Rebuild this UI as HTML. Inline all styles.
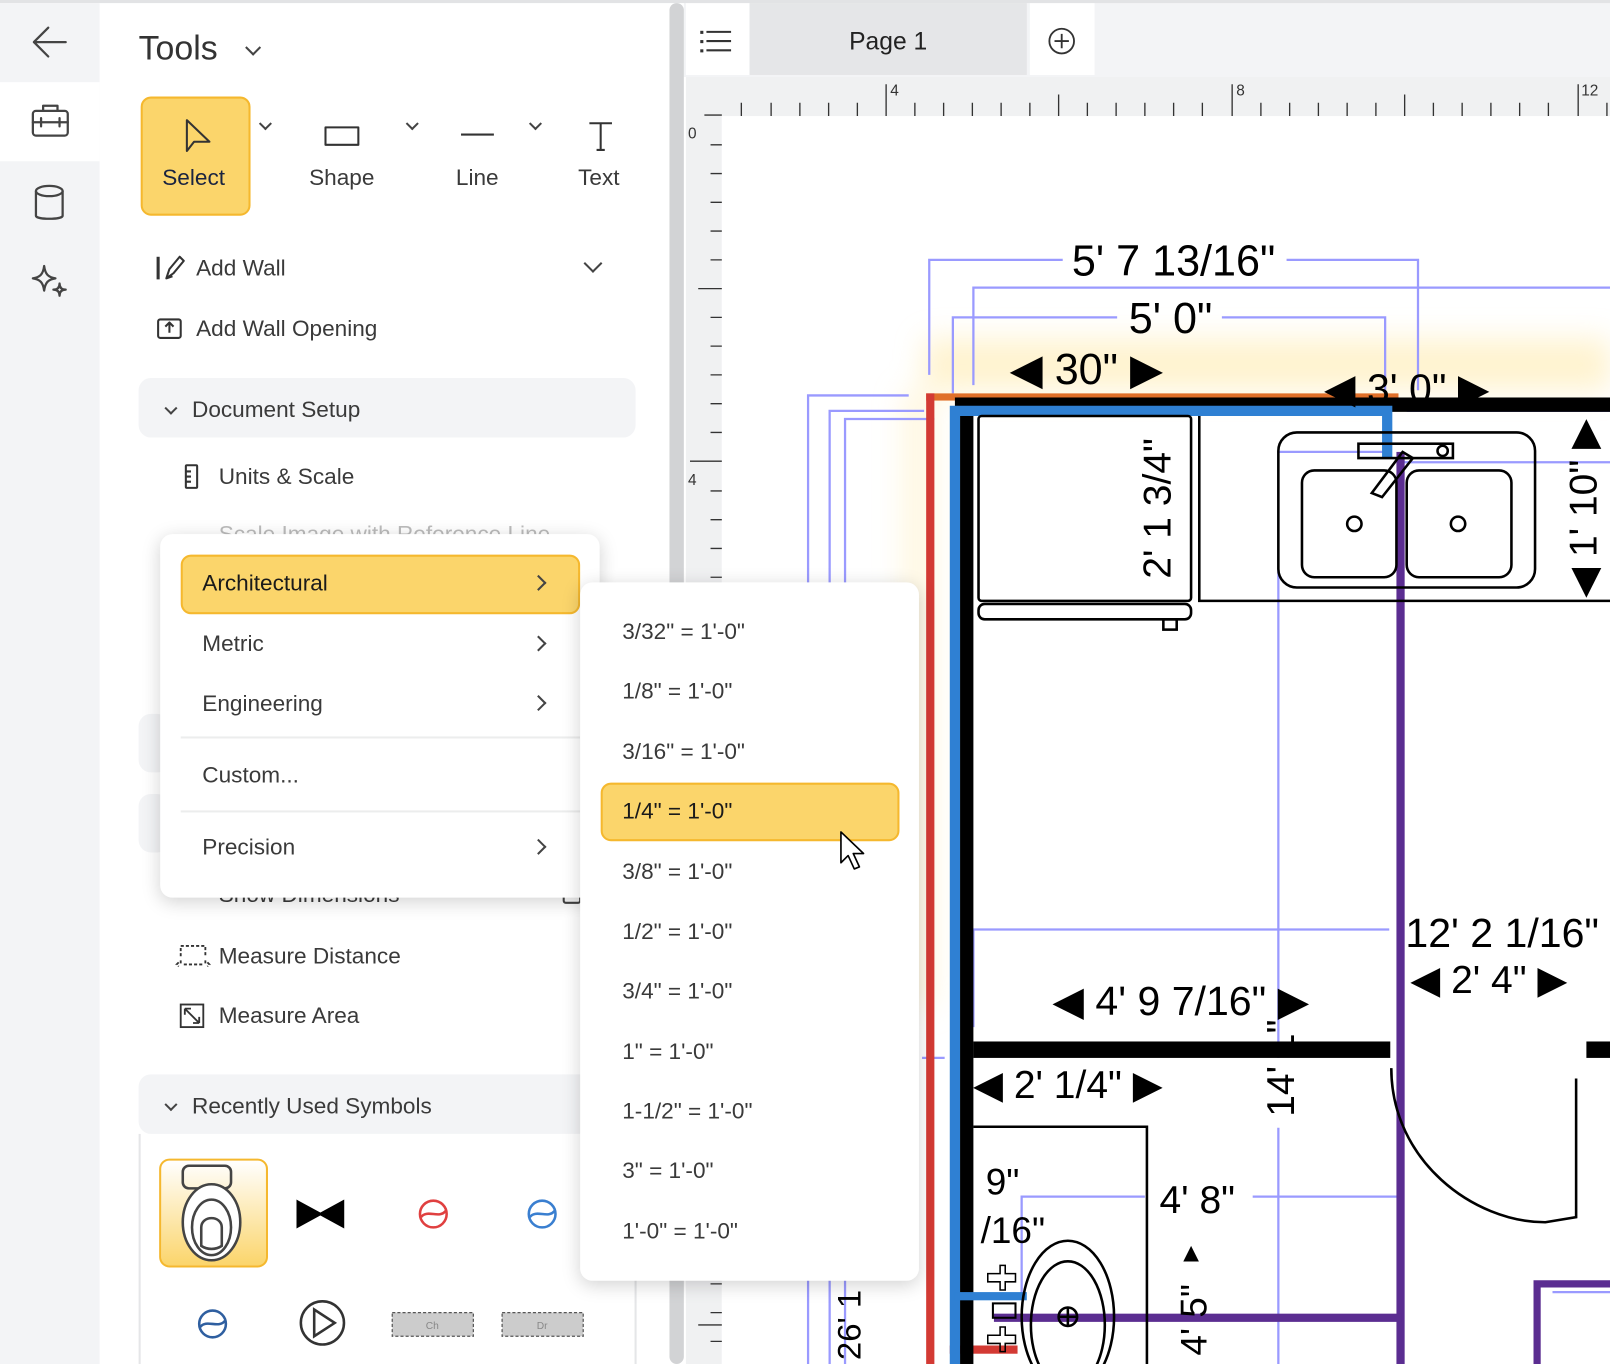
<!DOCTYPE html>
<html><head><meta charset="utf-8"><style>
*{margin:0;padding:0;box-sizing:border-box}
html,body{width:1610px;height:1364px;overflow:hidden;background:#fff;font-family:"Liberation Sans",sans-serif}
#w{position:absolute;left:0;top:0;width:1568px;height:1328px;transform:scale(1.02679,1.0271);transform-origin:0 0;overflow:hidden}
.a{position:absolute}
.t{position:absolute;white-space:nowrap;color:#3a3a3a;font-size:22px}
.ch{position:absolute;width:11px;height:11px;border-right:2px solid #444;border-bottom:2px solid #444;transform:rotate(45deg)}
.cr{position:absolute;width:11px;height:11px;border-right:2px solid #444;border-bottom:2px solid #444;transform:rotate(-45deg)}
.menu{position:absolute;background:#fff;border-radius:12px;box-shadow:0 4px 18px rgba(0,0,0,.18)}
.hl{position:absolute;background:#fbd56b;border:2px solid #f5b82e;border-radius:10px}
</style></head><body><div id="w">
<svg class="a" style="left:0;top:0" width="1568" height="1328" viewBox="0 0 1568 1328">
<defs><filter id="bl"><feGaussianBlur stdDeviation="14"/></filter></defs>
<rect x="666" y="0" width="902" height="75" fill="#f3f4f6"/>
<rect x="668" y="3" width="62" height="70" fill="#fff"/>
<rect x="730" y="3" width="270" height="70" fill="#e5e6e8"/>
<rect x="1003" y="3" width="63" height="70" fill="#fff"/>
<g stroke="#333" stroke-width="2"><line x1="688" y1="31" x2="712" y2="31"/><line x1="688" y1="40" x2="712" y2="40"/><line x1="688" y1="49" x2="712" y2="49"/></g>
<g fill="#333"><rect x="682" y="30" width="3" height="3"/><rect x="682" y="39" width="3" height="3"/><rect x="682" y="48" width="3" height="3"/></g>
<circle cx="1034" cy="40" r="12" fill="none" stroke="#333" stroke-width="1.8"/><path d="M1034 33v14M1027 40h14" stroke="#333" stroke-width="1.8"/>
<text x="865" y="48" font-size="24" text-anchor="middle" fill="#222" font-family="Liberation Sans">Page 1</text>
<rect x="668" y="75" width="900" height="38" fill="#f0f1f2"/>
<rect x="668" y="113" width="35" height="1215" fill="#f0f1f2"/>
<rect x="703" y="113" width="865" height="1215" fill="#fff"/>
<g stroke="#333" stroke-width="1.3">
<line x1="686" y1="112" x2="703" y2="112"/>
<path d="M722 100v13M751 100v13M779 100v13M807 100v13M835 100v13M891 100v13M919 100v13M947 100v13M975 100v13M1003 100v13M1059 100v13M1087 100v13M1115 100v13M1143 100v13M1171 100v13M1228 100v13M1256 100v13M1284 100v13M1312 100v13M1340 100v13M1396 100v13M1424 100v13M1452 100v13M1480 100v13M1508 100v13M1565 100v13"/>
<path d="M863 82v31M1200 82v31M1537 82v31M1031 92v21M1368 92v21"/>
<path d="M692 141h11M692 169h11M692 197h11M692 225h11M692 253h11M692 309h11M692 337h11M692 365h11M692 393h11M692 421h11M692 478h11M692 506h11M692 534h11M692 562h11M692 590h11M692 1250h11M692 1278h11M692 1306h11"/>
<path d="M680 281h23M672 449h31M680 1290h23"/>
</g>
<g font-size="15" fill="#333"><text x="867" y="93">4</text><text x="1204" y="93">8</text><text x="1540" y="93">12</text><text x="670" y="135">0</text><text x="670" y="472">4</text></g>
<g filter="url(#bl)" opacity=".55"><rect x="900" y="330" width="668" height="50" fill="#ffe9a8"/><rect x="880" y="380" width="30" height="600" fill="#fff0c4"/></g>
<g stroke="#9a9aff" stroke-width="2.2" fill="none">
<path d="M905 365V253h130M1253 253h128v127"/>
<path d="M948 375V280h620"/>
<path d="M928 383V309h160M1190 309h159v110"/>
<path d="M787 1328V385h98M808 1328V400h92M823 1328V408h87"/>
<path d="M1245 1030V440h110M1245 1098v230"/>
<path d="M1370 400h198M1365 450h203"/>
<path d="M948 1000V905h405"/>
<path d="M898 1030h22M905 1198v100"/>
<path d="M995 1265V1165h120M1220 1165h142v105"/>
<path d="M1497 1255v73M1512 1258h56"/>
</g>
<rect x="902" y="383" width="460" height="7" fill="#e0702a"/>
<rect x="902" y="383" width="8" height="945" fill="#d33a34"/>
<rect x="925" y="1310" width="66" height="8" fill="#d33a34"/>
<rect x="930" y="387" width="638" height="14" fill="#000"/>
<rect x="935" y="400" width="13" height="928" fill="#000"/>
<path d="M930 1328V400h421v45" stroke="#2f80d3" stroke-width="10" fill="none"/>
<rect x="930" y="1258" width="70" height="8" fill="#2f80d3"/>
<rect x="1360" y="440" width="8" height="888" fill="#5b2d91"/>
<rect x="968" y="1279" width="397" height="8" fill="#5b2d91"/>
<path d="M1497 1328V1250h71" stroke="#5b2d91" stroke-width="7" fill="none"/>
<rect x="948" y="1014" width="406" height="16" fill="#000"/>
<rect x="1545" y="1014" width="23" height="16" fill="#000"/>
<g stroke="#000" stroke-width="2.5" fill="none">
<rect x="953" y="405" width="207" height="180" rx="3"/>
<rect x="953" y="588" width="207" height="15" rx="6"/>
<rect x="1133" y="603" width="13" height="10"/>
<path d="M1168 405v180h400"/>
<rect x="1245" y="421" width="250" height="151" rx="18"/>
<rect x="1268" y="458" width="92" height="104" rx="12"/>
<rect x="1370" y="458" width="102" height="104" rx="12"/>
<circle cx="1319" cy="510" r="7"/><circle cx="1420" cy="510" r="7"/>
<rect x="1323" y="432" width="92" height="14"/><circle cx="1405" cy="439" r="5"/>
<path d="M1336 480l30-40 10 6-30 38z"/>
<path d="M1355 1040c0 90 80 150 150 150l30-5V1050"/>
<path d="M948 1097h169v231"/>
<ellipse cx="1040" cy="1282" rx="45" ry="74"/><ellipse cx="1040" cy="1290" rx="36" ry="62"/>
<circle cx="1040" cy="1282" r="9"/><path d="M1031 1282h18M1040 1273v18"/>
<path d="M962 1240h12v-8h5v8h10v8h-10v8h-5v-8h-12zM962 1300h12v-8h5v8h10v8h-10v8h-5v-8h-12z" stroke-width="1.5"/>
<rect x="967" y="1269" width="22" height="14" stroke-width="2"/>
</g>
<g font-family="'Liberation Sans Narrow','Liberation Sans',sans-serif" fill="#000">
<text x="1143" y="268" font-size="42" text-anchor="middle">5' 7 13/16"</text>
<text x="1140" y="324" font-size="42" text-anchor="middle">5' 0"</text>
<text x="1058" y="374" font-size="42" text-anchor="middle">◀ 30" ▶</text>
<text x="1370" y="392" font-size="40" text-anchor="middle">◀ 3' 0" ▶</text>
</g>
<g font-family="'Liberation Sans',sans-serif" fill="#000">
<text transform="translate(1140 495) rotate(-90)" font-size="38" text-anchor="middle">2' 1 3/4"</text>
<text transform="translate(1555 495) rotate(-90)" font-size="38" text-anchor="middle">◀ 1' 10" ▶</text>
<text x="1463" y="922" font-size="40" text-anchor="middle">12' 2 1/16"</text>
<text x="1450" y="967" font-size="38" text-anchor="middle">◀ 2' 4" ▶</text>
<text x="1150" y="988" font-size="40" text-anchor="middle">◀ 4' 9 7/16" ▶</text>
<text x="1040" y="1069" font-size="38" text-anchor="middle">◀ 2' 1/4" ▶</text>
<text transform="translate(1260 1040) rotate(-90)" font-size="38" text-anchor="middle">14' 1"</text>
<text x="1166" y="1181" font-size="38" text-anchor="middle">4' 8"</text>
<text x="960" y="1163" font-size="36">9"</text>
<text x="955" y="1210" font-size="36">/16"</text>
<text transform="translate(1175 1285) rotate(-90)" font-size="36" text-anchor="middle">4' 5"</text>
<text x="1160" y="1228" font-size="26" text-anchor="middle">▲</text>
<text transform="translate(838 1290) rotate(-90)" font-size="32" text-anchor="middle">26' 1</text>
</g>
</svg>
<div class="a" style="left:0;top:0;width:1568px;height:3px;background:#e2e3e5"></div>
<div class="a" style="left:0;top:3px;width:97px;height:1325px;background:#f3f4f6"></div>
<div class="a" style="left:0;top:80px;width:97px;height:77px;background:#fff"></div>
<svg class="a" style="left:0;top:0" width="97" height="300" fill="none" stroke="#444" stroke-width="2.2" stroke-linecap="round" stroke-linejoin="round">
<path d="M64 41H33M47 27L33 41l14 14"/>
<rect x="32" y="108" width="34" height="24" rx="3"/><path d="M42 108v-5h14v5M32 119h34M40 115v8M58 115v8"/>
<ellipse cx="48" cy="186" rx="13" ry="5"/><path d="M35 186v24c0 4 26 4 26 0v-24"/>
<path d="M43 259c1 8 4 11 11 12-7 1-10 4-11 12-1-8-4-11-11-12 7-1 10-4 11-12zM58 276c0 4 2 6 6 6-4 0-6 2-6 6 0-4-2-6-6-6 4 0 6-2 6-6z"/>
</svg>
<div class="a" style="left:652px;top:3px;width:14px;height:1325px;background:#d2d3d5;border-radius:7px"></div>
<div class="t" style="left:135px;top:28px;font-size:33px;color:#333">Tools</div>
<div class="ch" style="left:241px;top:41px"></div>
<div class="hl" style="left:137px;top:94px;width:107px;height:116px"></div>
<svg class="a" style="left:0;top:0" width="640" height="500" fill="none" stroke="#333" stroke-width="2" stroke-linejoin="round">
<path d="M182 117v30l7-9h15z"/>
<rect x="317" y="124" width="32" height="17"/>
<path d="M449 131h32"/>
<path d="M574 120h22M585 120v26M581 146h8"/>
<path d="M154 250v22" stroke-width="3"/><path d="M162 271l3-9 10-12 4 4-10 12zM162 271l6-2"/>
<rect x="154" y="311" width="22" height="18" rx="2"/><path d="M165 324v-9M161 318l4-4 4 4"/>
<rect x="181" y="453" width="11" height="22" rx="1"/><path d="M181 459h5M181 464h5M181 469h5"/>
</svg>
<div class="ch" style="left:254px;top:116px;width:9px;height:9px"></div>
<div class="ch" style="left:397px;top:116px;width:9px;height:9px"></div>
<div class="ch" style="left:517px;top:116px;width:9px;height:9px"></div>
<div class="t" style="left:158px;top:160px;color:#1a2440">Select</div>
<div class="t" style="left:301px;top:160px">Shape</div>
<div class="t" style="left:444px;top:160px">Line</div>
<div class="t" style="left:563px;top:160px">Text</div>
<div class="t" style="left:191px;top:248px">Add Wall</div>
<div class="ch" style="left:571px;top:250px;width:13px;height:13px"></div>
<div class="t" style="left:191px;top:307px">Add Wall Opening</div>
<div class="a" style="left:135px;top:368px;width:484px;height:58px;background:#f3f4f6;border-radius:12px"></div>
<div class="ch" style="left:162px;top:393px;width:9px;height:9px"></div>
<div class="t" style="left:187px;top:386px">Document Setup</div>
<div class="t" style="left:213px;top:451px">Units &amp; Scale</div>
<div class="t" style="left:213px;top:507px;color:#bbb">Scale Image with Reference Line</div>
<div class="a" style="left:135px;top:695px;width:30px;height:57px;background:#f3f4f6;border-radius:12px"></div>
<div class="a" style="left:135px;top:773px;width:30px;height:57px;background:#f3f4f6;border-radius:12px"></div>
<div class="t" style="left:213px;top:858px">Show Dimensions</div>
<div class="a" style="left:548px;top:862px;width:18px;height:18px;border:2px solid #444;border-radius:3px"></div>
<svg class="a" style="left:170px;top:915px" width="40" height="90" fill="none" stroke="#333" stroke-width="1.8"><path d="M6 16V6h24v10M6 20v4M30 20v4M4 22l-2 2 2 2M32 22l2 2-2 2M9 24h18" stroke-dasharray="3 2"/><rect x="6" y="63" width="22" height="22"/><path d="M10 67l14 14M10 67h6M10 67v6M24 81h-6M24 81v-6"/></svg>
<div class="t" style="left:213px;top:918px">Measure Distance</div>
<div class="t" style="left:213px;top:976px">Measure Area</div>
<div class="a" style="left:135px;top:1046px;width:484px;height:58px;background:#f3f4f6;border-radius:12px"></div>
<div class="ch" style="left:162px;top:1071px;width:9px;height:9px"></div>
<div class="t" style="left:187px;top:1064px">Recently Used Symbols</div>
<div class="a" style="left:135px;top:1104px;width:2px;height:224px;background:#e5e6e8"></div>
<div class="a" style="left:618px;top:1104px;width:2px;height:224px;background:#e5e6e8"></div>
<div class="hl" style="left:155px;top:1128px;width:106px;height:106px;background:linear-gradient(#fff 0%,#fbd56b 100%)"></div>
<svg class="a" style="left:150px;top:1125px" width="450" height="203" fill="none" stroke-width="2.5">
<rect x="28" y="10" width="47" height="22" rx="6" stroke="#444"/>
<ellipse cx="56" cy="65" rx="28" ry="37" stroke="#444" fill="#fff"/><ellipse cx="56" cy="70" rx="19" ry="27" stroke="#444"/><path d="M46 70c0-12 20-12 20 0v18c-6 4-14 4-20 0z" stroke="#444"/>
<path d="M140 45l22 12 22-12v24l-22-12-22 12z" fill="#000" stroke="#000"/>
<circle cx="272" cy="57" r="13" stroke="#e04040"/><path d="M260 60c6-8 18 2 24-6" stroke="#e04040"/>
<circle cx="378" cy="57" r="13" stroke="#3a7fd0"/><path d="M366 60c6-8 18 2 24-6" stroke="#3a7fd0"/>
<circle cx="57" cy="164" r="13" stroke="#2f5fa0"/><path d="M45 167c6-8 18 2 24-6" stroke="#2f5fa0"/>
<circle cx="164" cy="163" r="21" stroke="#333"/><path d="M156 150v26l20-13z" stroke="#333"/>
<rect x="232" y="153" width="79" height="23" fill="#ccc" stroke="#555" stroke-width="1.2" stroke-dasharray="3 2"/>
<rect x="339" y="153" width="79" height="23" fill="#ccc" stroke="#555" stroke-width="1.2" stroke-dasharray="3 2"/>
<text x="271" y="169" font-size="10" fill="#888" stroke="none" text-anchor="middle" font-family="Liberation Sans">Ch</text>
<text x="378" y="169" font-size="10" fill="#888" stroke="none" text-anchor="middle" font-family="Liberation Sans">Dr</text>
</svg>
<div class="menu" style="left:156px;top:520px;width:428px;height:354px"></div>
<div class="hl" style="left:176px;top:540px;width:389px;height:58px"></div>
<div class="t" style="left:197px;top:555px;color:#1a1a1a">Architectural</div>
<div class="t" style="left:197px;top:614px">Metric</div>
<div class="t" style="left:197px;top:672px">Engineering</div>
<div class="a" style="left:176px;top:717px;width:389px;height:2px;background:#eceded"></div>
<div class="t" style="left:197px;top:742px">Custom...</div>
<div class="a" style="left:176px;top:789px;width:389px;height:2px;background:#eceded"></div>
<div class="t" style="left:197px;top:812px">Precision</div>
<div class="cr" style="left:519px;top:562px"></div>
<div class="cr" style="left:519px;top:621px"></div>
<div class="cr" style="left:519px;top:679px"></div>
<div class="cr" style="left:519px;top:819px"></div>
<div class="menu" style="left:565px;top:567px;width:330px;height:680px"></div>
<div class="hl" style="left:585px;top:762px;width:291px;height:57px"></div>
<div class="t" style="left:606px;top:602px">3/32" = 1'-0"</div>
<div class="t" style="left:606px;top:660px">1/8" = 1'-0"</div>
<div class="t" style="left:606px;top:719px">3/16" = 1'-0"</div>
<div class="t" style="left:606px;top:777px;color:#1a1a1a">1/4" = 1'-0"</div>
<div class="t" style="left:606px;top:836px">3/8" = 1'-0"</div>
<div class="t" style="left:606px;top:894px">1/2" = 1'-0"</div>
<div class="t" style="left:606px;top:952px">3/4" = 1'-0"</div>
<div class="t" style="left:606px;top:1011px">1" = 1'-0"</div>
<div class="t" style="left:606px;top:1069px">1-1/2" = 1'-0"</div>
<div class="t" style="left:606px;top:1127px">3" = 1'-0"</div>
<div class="t" style="left:606px;top:1186px">1'-0" = 1'-0"</div>
<svg class="a" style="left:816px;top:808px" width="30" height="45"><path d="M3 2v30l7-7 6 13 5-2-6-13h10z" fill="#fff" stroke="#000" stroke-width="1.6" stroke-linejoin="round"/></svg>
</div></body></html>
